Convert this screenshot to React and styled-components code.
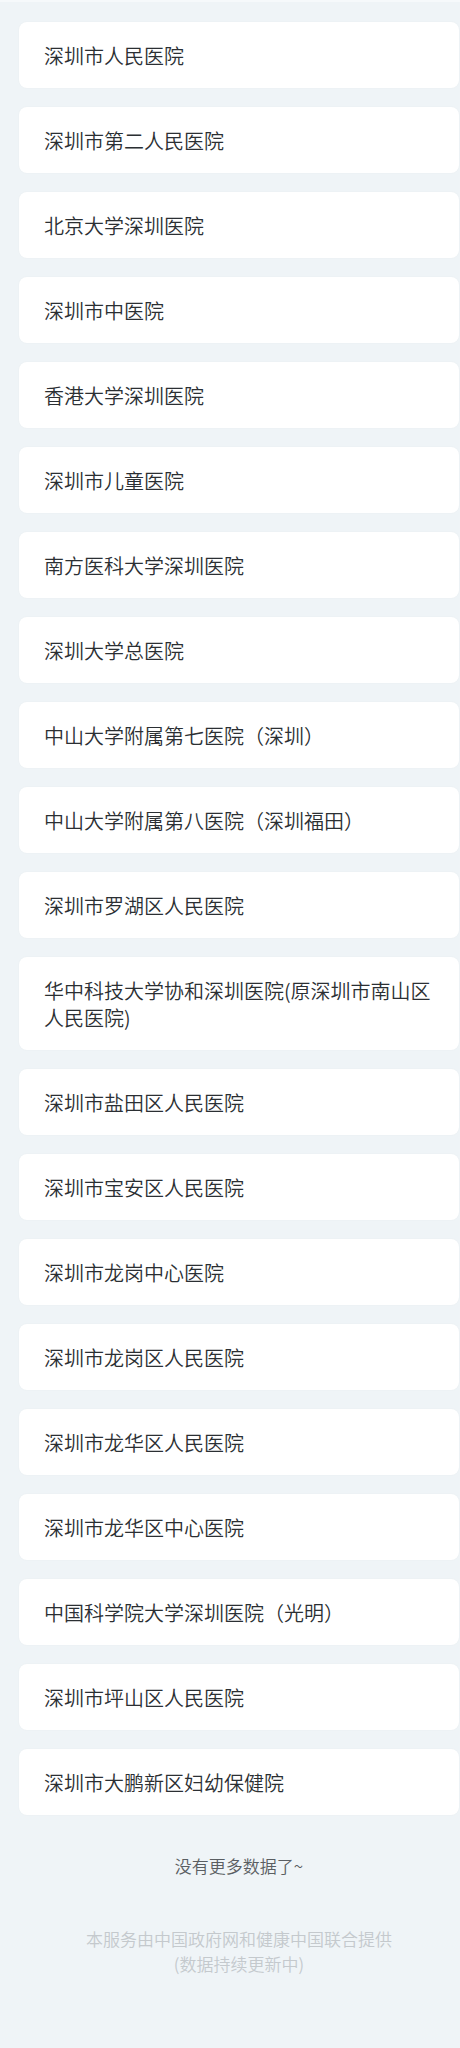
import styled, { createGlobalStyle } from "styled-components";

const hospitals = [
  "深圳市人民医院",
  "深圳市第二人民医院",
  "北京大学深圳医院",
  "深圳市中医院",
  "香港大学深圳医院",
  "深圳市儿童医院",
  "南方医科大学深圳医院",
  "深圳大学总医院",
  "中山大学附属第七医院（深圳）",
  "中山大学附属第八医院（深圳福田）",
  "深圳市罗湖区人民医院",
  "华中科技大学协和深圳医院(原深圳市南山区人民医院)",
  "深圳市盐田区人民医院",
  "深圳市宝安区人民医院",
  "深圳市龙岗中心医院",
  "深圳市龙岗区人民医院",
  "深圳市龙华区人民医院",
  "深圳市龙华区中心医院",
  "中国科学院大学深圳医院（光明）",
  "深圳市坪山区人民医院",
  "深圳市大鹏新区妇幼保健院",
];

const GlobalStyle = createGlobalStyle`
  * { box-sizing: border-box; }
  html, body {
    margin: 0;
    padding: 0;
    background: #eff4f7;
    font-family: "Noto Sans CJK SC", "Noto Sans", sans-serif;
  }
`;

const Page = styled.div`
  min-height: 2048px;
  padding: 20px 0 0 19px;
  border-top: 2px solid #f6f9fb;
  overflow: hidden;
`;

const List = styled.ul`
  list-style: none;
  margin: 0;
  padding: 0;
  width: 440px;
  display: flex;
  flex-direction: column;
  gap: 19px;
`;

const Item = styled.li`
  background: #fff;
  border-radius: 8px;
  box-shadow: 0 0 2px rgba(0, 0, 0, 0.04);
  padding: 19.5px 25px;
  font-size: 20px;
  font-weight: 350;
  line-height: 27px;
  color: #2b2f33;
`;

const Footer = styled.div`
  width: 440px;
  text-align: center;
`;

const NoMore = styled.p`
  margin: 39px 0 0;
  font-size: 17px;
  font-weight: 350;
  line-height: 24px;
  color: #5a5e62;
`;

const Credit = styled.p`
  margin: 48px 0 0;
  font-size: 17px;
  font-weight: 350;
  line-height: 25px;
  color: #c4c9cd;
`;

const App = () => {
  return (
    <>
      <GlobalStyle />
      <Page>
        <List>
          {hospitals.map((name) => (
            <Item key={name}>{name}</Item>
          ))}
        </List>
        <Footer>
          <NoMore>没有更多数据了~</NoMore>
          <Credit>
            本服务由中国政府网和健康中国联合提供
            <br />
            (数据持续更新中)
          </Credit>
        </Footer>
      </Page>
    </>
  );
};

export default App;
